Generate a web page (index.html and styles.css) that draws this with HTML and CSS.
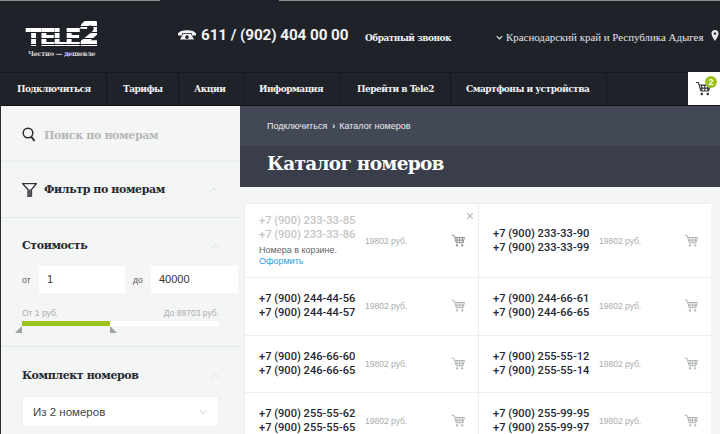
FILE: index.html
```html
<!DOCTYPE html>
<html lang="ru">
<head>
<meta charset="utf-8">
<title>Каталог номеров</title>
<link rel="stylesheet" href="styles.css">
</head>
<body>
<svg class="defs" width="0" height="0">
  <symbol id="cart" viewBox="0 0 20 20"><path d="M1 3h3l3 10h9l2-7H5M6 9.500h11M8 6v7M11.500 6v7M15 6v7" fill="none" stroke="currentColor" stroke-width="1.300"/><circle cx="8" cy="16.500" r="1.500" fill="currentColor"/><circle cx="15" cy="16.500" r="1.500" fill="currentColor"/></symbol>
  <symbol id="chev" viewBox="0 0 10 6"><path d="M1 5l4-4 4 4" fill="none" stroke="currentColor" stroke-width="1.200"/></symbol>
</svg>
<div class="topstrip"><span class="strip-dark"></span></div>
<header class="header">
  <div class="logo">
    <div class="logo-mark">TELE<span class="logo-two">2</span></div>
    <div class="logo-tag">Честно — дешевле</div>
  </div>
  <svg class="phone-icon" viewBox="0 0 18 12"><path d="M0 4.500C2 0 16 0 18 4.500L18 6.500H14V4.200H4V6.500H0ZM5 5h8l3 5.500H2ZM9 6.300a1.800 1.800 0 1 0 .01 0Z" fill="#f2f2f2" fill-rule="evenodd"/></svg>
  <div class="phone">611 / (902) 404 00 00</div>
  <div class="callback">Обратный звонок</div>
  <div class="region">
    <svg class="region-chev" viewBox="0 0 10 6"><path d="M1 1l4 4 4-4" fill="none" stroke="#e8e8e8" stroke-width="1.600"/></svg>
    <span>Краснодарский край и Республика Адыгея</span>
    <svg class="pin" viewBox="0 0 10 14"><path d="M5 0a4.500 4.500 0 0 1 4.500 4.500C9.500 8 5 14 5 14S.5 8 .5 4.500A4.500 4.500 0 0 1 5 0Zm0 3a1.500 1.500 0 1 0 .01 0Z" fill="#e8e8e8" fill-rule="evenodd"/></svg>
  </div>
</header>
<nav class="nav">
  <a class="nav-item nav-1">Подключиться</a>
  <a class="nav-item nav-2">Тарифы</a>
  <a class="nav-item nav-3">Акции</a>
  <a class="nav-item nav-4">Информация</a>
  <a class="nav-item nav-5">Перейти в Tele2</a>
  <a class="nav-item nav-6">Смартфоны и устройства</a>
  <div class="nav-cart">
    <svg class="nav-cart-icon"><use href="#cart"/></svg>
    <span class="badge">2</span>
  </div>
</nav>
<div class="page">
  <aside class="side">
    <section class="s-search">
      <svg class="search-icon" viewBox="0 0 14 15"><circle cx="6" cy="6" r="4.800" fill="none" stroke="#2a2c33" stroke-width="1.500"/><path d="M9.500 10l3 4" stroke="#2a2c33" stroke-width="2"/></svg>
      <span class="search-text">Поиск по номерам</span>
    </section>
    <section class="s-filter">
      <svg class="filter-icon" viewBox="0 0 15 14"><path d="M.5.500h14L9.500 6.500V13L6 14V6.500Z" fill="#fff" stroke="#33353c" stroke-width="1.300"/><path d="M6 6.500h3.500V13L6 14Z" fill="#55575d"/></svg>
      <h3 class="s-title">Фильтр по номерам</h3>
      <svg class="s-chev"><use href="#chev"/></svg>
    </section>
    <section class="s-cost">
      <div class="s-head">
        <h3 class="s-title">Стоимость</h3>
        <svg class="s-chev"><use href="#chev"/></svg>
      </div>
      <div class="range-inputs">
        <span class="lbl lbl-from">от</span>
        <div class="field field-from">1</div>
        <span class="lbl lbl-to">до</span>
        <div class="field field-to">40000</div>
      </div>
      <div class="range-labels"><span>От 1 руб.</span><span>До 89703 руб.</span></div>
      <div class="slider">
        <div class="slider-fill"></div>
        <span class="handle handle-l"></span>
        <span class="handle handle-r"></span>
      </div>
    </section>
    <section class="s-set">
      <div class="s-head">
        <h3 class="s-title">Комплект номеров</h3>
        <svg class="s-chev"><use href="#chev"/></svg>
      </div>
      <div class="select">
        <span>Из 2 номеров</span>
        <svg class="select-chev"><use href="#chev"/></svg>
      </div>
    </section>
  </aside>
  <main class="main">
    <div class="crumbs"><span>Подключиться</span><span class="crumb-sep">›</span><span>Каталог номеров</span></div>
    <h1 class="title">Каталог номеров</h1>
    <div class="catalog">
      <div class="grid">
        <div class="cell cell-in row-1">
          <div class="nums"><div>+7 (900) 233-33-85</div><div>+7 (900) 233-33-86</div>
            <div class="in-cart">Номера в корзине.</div><a class="checkout">Оформить</a></div>
          <div class="price">19802 руб.</div>
          <svg class="cart cart-dark"><use href="#cart"/></svg>
          <span class="close">×</span>
        </div>
        <div class="cell row-1">
          <div class="nums"><div>+7 (900) 233-33-90</div><div>+7 (900) 233-33-99</div></div>
          <div class="price">19802 руб.</div>
          <svg class="cart"><use href="#cart"/></svg>
        </div>
        <div class="cell">
          <div class="nums"><div>+7 (900) 244-44-56</div><div>+7 (900) 244-44-57</div></div>
          <div class="price">19802 руб.</div>
          <svg class="cart"><use href="#cart"/></svg>
        </div>
        <div class="cell">
          <div class="nums"><div>+7 (900) 244-66-61</div><div>+7 (900) 244-66-65</div></div>
          <div class="price">19802 руб.</div>
          <svg class="cart"><use href="#cart"/></svg>
        </div>
        <div class="cell">
          <div class="nums"><div>+7 (900) 246-66-60</div><div>+7 (900) 246-66-65</div></div>
          <div class="price">19802 руб.</div>
          <svg class="cart"><use href="#cart"/></svg>
        </div>
        <div class="cell">
          <div class="nums"><div>+7 (900) 255-55-12</div><div>+7 (900) 255-55-14</div></div>
          <div class="price">19802 руб.</div>
          <svg class="cart"><use href="#cart"/></svg>
        </div>
        <div class="cell">
          <div class="nums"><div>+7 (900) 255-55-62</div><div>+7 (900) 255-55-65</div></div>
          <div class="price">19802 руб.</div>
          <svg class="cart"><use href="#cart"/></svg>
        </div>
        <div class="cell">
          <div class="nums"><div>+7 (900) 255-99-95</div><div>+7 (900) 255-99-97</div></div>
          <div class="price">19802 руб.</div>
          <svg class="cart"><use href="#cart"/></svg>
        </div>
      </div>
    </div>
  </main>
</div>
</body>
</html>
```
FILE: styles.css
```css
* { box-sizing: border-box; margin: 0; padding: 0; }
html, body { width: 720px; height: 434px; overflow: hidden; }
body { background: #1f2229; font-family: "Liberation Sans", Arial, sans-serif; color: #222; }
.defs { position: absolute; }
.topstrip { height: 1px; background: #8c8c8c; display: flex; padding-left: 160px; }
.strip-dark { width: 119px; background: #1f2229; }

.header { height: 71px; display: flex; align-items: center; color: #f2f2f2; position: relative; }
.logo { margin-left: 25px; width: 72px; flex: none; margin-top: 6px; }
.logo-mark { font: 900 25px/24px "Inter", "Liberation Sans", sans-serif; letter-spacing: -2px; height: 27px; white-space: nowrap; background: repeating-linear-gradient(180deg, #fff 0 5px, #1f2229 5px 6px); -webkit-background-clip: text; background-clip: text; -webkit-text-fill-color: transparent; }
.logo-two { font-size: 36px; line-height: 24px; }
.logo-tag { font: 700 6.600px/9px "DejaVu Serif", serif; color: #d8d8d8; letter-spacing: -.3px; white-space: nowrap; margin-left: 3px; margin-top: 2px; }
.phone-icon { width: 18px; height: 12px; margin-left: 81px; flex: none; margin-top: -3px; }
.phone { font: 700 15.300px/20px "Roboto", sans-serif; margin-left: 5px; margin-top: -3px; white-space: nowrap; width: 156px; flex: none; letter-spacing: -.1px; }
.callback { font: 700 8.900px/14px "DejaVu Serif", serif; margin-left: 8px; margin-top: 3px; white-space: nowrap; letter-spacing: -.45px; width: 86px; flex: none; }
.region { display: flex; align-items: center; margin-left: 45px; font: 400 10.900px/14px "Liberation Serif", serif; color: #e4e4e4; white-space: nowrap; margin-top: 1px; }
.region-chev { width: 7px; height: 5px; margin-right: 3px; flex: none; }
.pin { width: 8px; height: 11px; margin-left: 8px; margin-top: -3px; flex: none; }

.nav { height: 33px; display: flex; position: relative; border-top: 1px solid #16181d; }
.nav-item { font: 700 9px/32px "DejaVu Serif", serif; color: #f2f2f2; white-space: nowrap; letter-spacing: -.5px; border-right: 1px solid #16181d; display: block; }
.nav-1 { width: 107px; padding-left: 17px; }
.nav-2 { width: 72px; padding-left: 16px; }
.nav-3 { width: 65px; padding-left: 15px; }
.nav-4 { width: 97px; padding-left: 15px; }
.nav-5 { width: 110px; padding-left: 16px; }
.nav-6 { width: 156px; padding-left: 15px; }
.nav-cart { position: absolute; left: 688px; top: -1px; width: 32px; height: 33px; background: #fff; }
.nav-cart-icon { position: absolute; left: 7px; top: 8px; width: 17px; height: 17px; color: #33353c; }
.badge { position: absolute; left: 17px; top: 4px; width: 12px; height: 12px; border-radius: 50%; background: #9bc31c; color: #fff; font: 700 9px/12px "Liberation Sans", sans-serif; text-align: center; }

.page { display: flex; height: 329px; border-top: 1px solid #111; }
.side { width: 240px; background: #f4f6f6; border-left: 1px solid #2a2c33; flex: none; overflow: hidden; }
.s-title { font: 700 11px/16px "DejaVu Serif", serif; color: #26282e; letter-spacing: -.4px; white-space: nowrap; }
.s-chev { width: 9px; height: 6px; color: #dfe5e7; display: block; flex: none; }
.s-search { height: 56px; display: flex; align-items: center; padding: 5px 0 0 21px; border-bottom: 2px solid #eceff0; }
.search-icon { width: 14px; height: 15px; margin-right: 8px; flex: none; margin-top: -2px; }
.search-text { font: 700 11px/16px "DejaVu Serif", serif; color: #b4b6b8; letter-spacing: -.35px; white-space: nowrap; }
.s-filter { height: 56px; display: flex; align-items: center; padding: 1px 0 0 21px; border-bottom: 1px solid #e2e7e9; }
.filter-icon { width: 15px; height: 14px; margin-right: 7px; flex: none; }
.s-filter .s-chev { margin-left: 44px; }
.s-cost { height: 129px; padding: 20px 0 0 21px; border-bottom: 1px solid #e2e7e9; }
.s-head { display: flex; justify-content: space-between; align-items: center; width: 198px; }
.range-inputs { display: flex; align-items: center; margin-top: 12px; }
.lbl { font: 400 8.500px/12px "Liberation Sans", sans-serif; color: #555; }
.lbl-from { width: 17px; }
.lbl-to { width: 26px; padding-left: 8px; }
.field { height: 27px; background: #fff; font: 400 11px/27px "Liberation Sans", sans-serif; color: #333; padding-left: 8px; }
.field-from { width: 86px; }
.field-to { width: 87px; }
.range-labels { display: flex; justify-content: space-between; width: 197px; font: 400 8.500px/12px "Liberation Sans", sans-serif; color: #a9abac; margin-top: 14px; }
.slider { position: relative; width: 197px; height: 5px; background: #fff; margin-top: 2px; }
.slider-fill { width: 88px; height: 5px; background: #9bc31c; }
.handle { position: absolute; top: 5px; width: 0; height: 0; border-bottom: 7px solid #9fa3a6; }
.handle-l { left: -7px; border-left: 7px solid transparent; }
.handle-r { left: 88px; border-right: 7px solid transparent; }
.s-set { padding: 21px 0 0 21px; }
.select { width: 197px; height: 31px; margin-top: 12px; background: #fff; border: 1px solid #edf0f1; display: flex; align-items: center; justify-content: space-between; padding: 0 10px; font: 400 11.500px/16px "Liberation Sans", sans-serif; color: #444; }
.select-chev { width: 9px; height: 6px; color: #d6dee2; transform: rotate(180deg); }

.main { flex: 1; background: #f4f6f6; min-width: 0; overflow: hidden; }
.crumbs { height: 40px; background: #434857; display: flex; align-items: center; padding-left: 27px; font: 400 9px/12px "Liberation Sans", sans-serif; color: #eceded; }
.crumb-sep { margin: 0 4px 0 5px; font-weight: 700; }
.title { height: 41px; background: #3a3e4b; padding-left: 27px; font: 700 18.500px/36px "DejaVu Serif", serif; color: #fff; letter-spacing: -.7px; white-space: nowrap; }
.catalog { padding: 16px 10px 0 4px; }
.grid { display: grid; grid-template-columns: 234px 232px; background: #fff; border: 1px solid #eaeef0; border-bottom: 0; }
.cell { position: relative; display: flex; align-items: center; padding-left: 14px; height: 57.500px; border-bottom: 1px solid #eaeef0; background: #fff; }
.cell:nth-child(odd) { border-right: 1px solid #eaeef0; }
.row-1 { height: 74px; }
.nums { font: 500 11.100px/14px "Roboto", sans-serif; color: #26282e; width: 106px; white-space: nowrap; }
.cell-in .nums { color: #c4c5c6; }
.in-cart { font: 400 9px/11px "Liberation Sans", sans-serif; color: #666; margin-top: 3px; }
.checkout { display: block; font: 400 9px/11px "Liberation Sans", sans-serif; color: #2aa0e0; }
.price { font: 400 8.500px/12px "Liberation Sans", sans-serif; color: #aaacad; white-space: nowrap; }
.cart { position: absolute; right: 12px; top: 50%; margin-top: -8px; width: 15px; height: 15px; color: #b0b3b5; }
.cart-dark { color: #8b8e90; }
.close { position: absolute; right: 4px; top: 5px; font: 400 14px/14px "Liberation Sans", sans-serif; color: #b3b6b8; }
```
